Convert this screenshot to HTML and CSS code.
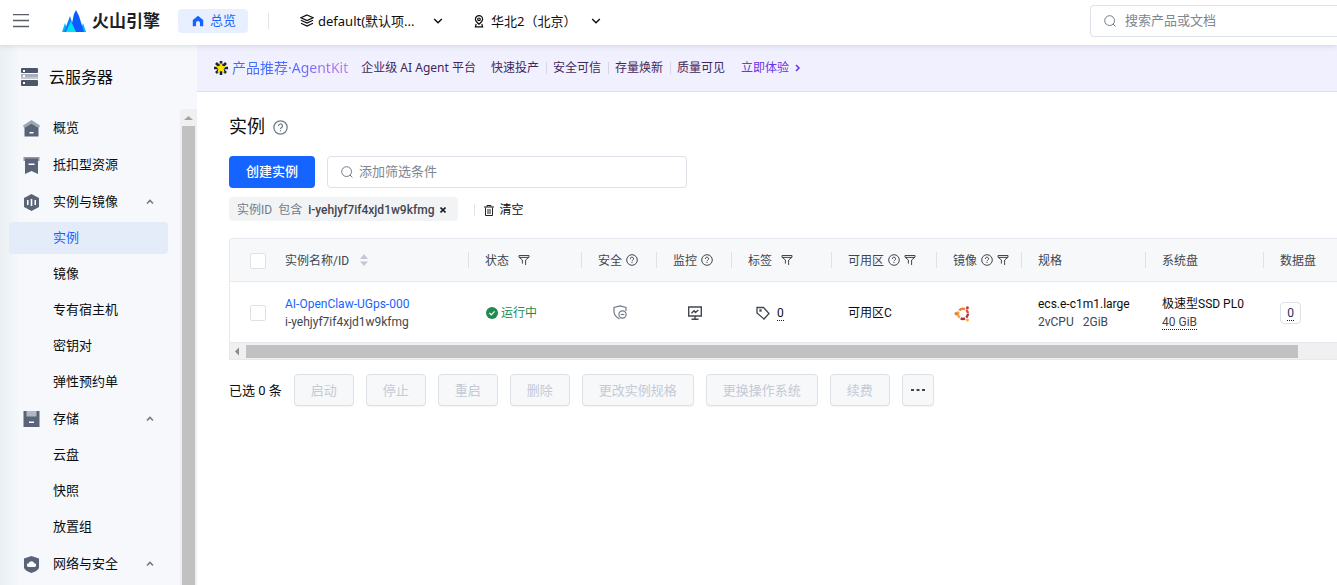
FILE: index.html
```
<!DOCTYPE html>
<html lang="zh-CN">
<head>
<meta charset="UTF-8">
<meta name="viewport" content="width=device-width, initial-scale=1.0">
<title>云服务器 - 实例</title>
<link rel="stylesheet" href="styles.css">
</head>
<body>
    <!-- Shared icons -->
    <svg class="sprite" aria-hidden="true">
        <symbol id="help" viewBox="0 0 12 12">
            <circle cx="6" cy="6" r="5.3" fill="none" stroke="currentColor"/>
            <path d="M4.4 4.9a1.6 1.6 0 1 1 2.3 1.3c-.5.3-.7.5-.7 1" fill="none" stroke="currentColor"/>
            <path d="M5.5 8.1h1v1h-1z" fill="currentColor"/>
        </symbol>
        <symbol id="filter" viewBox="0 0 12 12">
            <path d="M1 1.500h10v1.700L7.600 6v5M1 1.500v1.700L4.400 6v3.600M1 3.400h10" fill="none" stroke="currentColor"/>
        </symbol>
        <symbol id="search" viewBox="0 0 12 12">
            <circle cx="5.6" cy="5.6" r="4.9" fill="none" stroke="currentColor"/>
            <path d="M9 9l2.4 2.4" fill="none" stroke="currentColor"/>
        </symbol>
        <symbol id="down" viewBox="0 0 10 10">
            <path d="M1.2 3L5 6.800 8.800 3" fill="none" stroke="currentColor" stroke-width="1.4"/>
        </symbol>
        <symbol id="up" viewBox="0 0 8 8">
            <path d="M1 5.500l3-3 3 3" fill="none" stroke="currentColor" stroke-width="1.600"/>
        </symbol>
    </svg>

    <!-- Top bar -->
    <header class="topbar">
        <button class="menu-btn" type="button" aria-label="菜单">
            <svg width="16" height="14" viewBox="0 0 16 14"><path d="M0 .5h16M0 6.500h16M0 12.500h16" stroke="#5a5e66" stroke-width="1.400"/></svg>
        </button>
        <a class="logo" href="#">
            <svg width="24" height="22" viewBox="0 0 24 22">
                <path d="M0 22l3-9 3 9z" fill="#00b8f5"/>
                <path d="M18 22l3-9 3 9z" fill="#00b8f5"/>
                <path d="M2 22L8 6l5 16z" fill="#0a7cff"/>
                <path d="M8 22l4-18 2-4 3 6 5 16z" fill="#0a5cff"/>
                <path d="M4 22l5-11 5 11z" fill="#00e0f0"/>
            </svg>
            <span>火山引擎</span>
        </a>
        <a class="overview" href="#">
            <svg width="12" height="12" viewBox="0 0 12 12"><path d="M6 .8L.8 5v6.200H4V8a2 2 0 0 1 4 0v3.200h3.200V5z" fill="#1664ff"/></svg>
            <span>总览</span>
        </a>
        <span class="topbar-line"></span>
        <button class="picker project" type="button">
            <svg width="14" height="14" viewBox="0 0 14 14" fill="none" stroke="currentColor" stroke-width="1.200"><path d="M7 1l6 2.800-6 2.800-6-2.800zM1 6.300l6 2.800 6-2.800M1 9.300l6 2.800 6-2.800"/></svg>
            <span>default(默认项...</span>
            <svg class="arrow" width="10" height="10"><use href="#down"/></svg>
        </button>
        <button class="picker region" type="button">
            <svg width="10" height="13" viewBox="0 0 10 13" fill="none" stroke="currentColor" stroke-width="1.200"><path d="M5 9.200C2.600 7.400 1.400 6 1.400 4.300a3.600 3.600 0 0 1 7.200 0C8.600 6 7.400 7.400 5 9.200z"/><circle cx="5" cy="4.300" r="1.300"/><path d="M2.200 9L1.400 11.800h7.200L7.800 9"/></svg>
            <span>华北2（北京）</span>
            <svg class="arrow" width="10" height="10"><use href="#down"/></svg>
        </button>
        <label class="top-search">
            <svg width="12" height="12"><use href="#search"/></svg>
            <input type="search" placeholder="搜索产品或文档" aria-label="搜索">
        </label>
    </header>

    <div class="layout">
        <!-- Side navigation -->
        <aside class="sidebar">
            <div class="service">
                <svg width="18" height="18" viewBox="0 0 18 18">
                    <rect x="0" width="17" height="5" rx="1" fill="#4d566b"/>
                    <rect x="0" y="6" width="17" height="3" fill="#a9afbd"/>
                    <rect x="0" y="9" width="17" height="2" fill="#c3c8d1"/>
                    <rect x="0" y="12" width="17" height="6" rx="1" fill="#4d566b"/>
                    <path d="M2 2h2v2H2zM2 7h2v2H2zM2 14h2v2H2z" fill="#fff"/>
                </svg>
                <span>云服务器</span>
            </div>
            <div class="side-body">
                <nav class="nav">
                    <div class="group">
                        <a class="item top" href="#">
                            <svg width="17" height="17" viewBox="0 0 17 17"><path d="M8.500 0L17 5.500 16 8H1L0 5.500z" fill="#a0a6b2"/><path d="M1.500 8l7-4.200 7 4.200v8.500h-14z" fill="#5a6478"/><path d="M6.500 12h4v1.500h-4z" fill="#fff"/></svg>
                            <span>概览</span>
                        </a>
                    </div>
                    <div class="group">
                        <a class="item top" href="#">
                            <svg width="17" height="17" viewBox="0 0 17 17"><path d="M.5 0h16v4H.5z" fill="#9299a7"/><path d="M2 1.500h13V17l-6.500-3L2 17z" fill="#5a6478"/><path d="M5.500 6.500h6V8h-6z" fill="#fff"/></svg>
                            <span>抵扣型资源</span>
                        </a>
                    </div>
                    <div class="group">
                        <a class="item top" href="#">
                            <svg width="17" height="17" viewBox="0 0 17 17"><path d="M8.500 0L16 4v9l-7.500 4L1 13V4z" fill="#5a6478"/><path d="M4 6h1.500v5H4zM7.700 5h1.600v7H7.700zM11.500 6H13v5h-1.500z" fill="#fff"/></svg>
                            <span>实例与镜像</span>
                            <svg class="fold" width="8" height="8"><use href="#up"/></svg>
                        </a>
                        <a class="item active" href="#">实例</a>
                        <a class="item" href="#">镜像</a>
                        <a class="item" href="#">专有宿主机</a>
                        <a class="item" href="#">密钥对</a>
                        <a class="item" href="#">弹性预约单</a>
                    </div>
                    <div class="group">
                        <a class="item top" href="#">
                            <svg width="17" height="17" viewBox="0 0 17 17"><path d="M.5 0h16v16H.5z" fill="#5a6478"/><path d="M3.500 0h10v5.500h-10z" fill="#b2b8c2"/><path d="M6 10.500h5V12H6z" fill="#fff"/></svg>
                            <span>存储</span>
                            <svg class="fold" width="8" height="8"><use href="#up"/></svg>
                        </a>
                        <a class="item" href="#">云盘</a>
                        <a class="item" href="#">快照</a>
                        <a class="item" href="#">放置组</a>
                    </div>
                    <div class="group">
                        <a class="item top" href="#">
                            <svg width="17" height="17" viewBox="0 0 17 17"><path d="M8.500 0L16 2.500V12c-1 2.200-4 4-7.500 5C5 16 2 14.200 1 12V2.500z" fill="#5a6478"/><path d="M5.700 11a1.900 1.900 0 0 1 0-3.800 3 3 0 0 1 5.600 0 1.900 1.900 0 0 1 0 3.800z" fill="#fff"/></svg>
                            <span>网络与安全</span>
                            <svg class="fold" width="8" height="8"><use href="#up"/></svg>
                        </a>
                    </div>
                </nav>
                <div class="vscroll">
                    <svg width="13" height="17" viewBox="0 0 13 17"><path d="M2 11l4.500-4 4.500 4z" fill="#a3a3a3"/></svg>
                    <div class="vthumb"></div>
                </div>
            </div>
        </aside>

        <main class="main">
            <!-- Promo banner -->
            <div class="banner">
                <svg width="14" height="14" viewBox="0 0 14 14"><path d="M7 0v14M0 7h14M2 2l10 10M12 2L2 12" stroke="#14243c" stroke-width="2.600"/><path d="M7 1.500l1.700 3.400 3.800.4-2.800 2.600.8 3.900L7 10l-3.500 1.800.8-3.900-2.800-2.600 3.800-.4z" fill="#ffe000"/></svg>
                <strong>产品推荐·AgentKit</strong>
                <span class="slogan">企业级 AI Agent 平台</span>
                <ul class="points">
                    <li>快速投产</li>
                    <li>安全可信</li>
                    <li>存量焕新</li>
                    <li>质量可见</li>
                </ul>
                <a class="try" href="#">立即体验
                    <svg width="6" height="8" viewBox="0 0 6 8"><path d="M1 1l3 3-3 3" fill="none" stroke="currentColor" stroke-width="1.600"/></svg>
                </a>
            </div>

            <div class="content">
                <h1>实例 <svg width="15" height="15"><use href="#help"/></svg></h1>

                <div class="toolbar">
                    <button class="create" type="button">创建实例</button>
                    <label class="filter-box">
                        <svg width="12" height="12"><use href="#search"/></svg>
                        <input type="text" placeholder="添加筛选条件" aria-label="筛选条件">
                    </label>
                </div>

                <div class="filters">
                    <span class="tag">
                        <span>实例ID</span>
                        <span>包含</span>
                        <b>i-yehjyf7if4xjd1w9kfmg</b>
                        <button type="button" aria-label="移除">
                            <svg width="6" height="6" viewBox="0 0 6 6"><path d="M.5.5l5 5M5.500.5l-5 5" stroke="#1d2129" stroke-width="1.600"/></svg>
                        </button>
                    </span>
                    <button class="clear" type="button">
                        <svg width="10" height="11" viewBox="0 0 10 11" fill="none" stroke="#1d2129"><path d="M0 2h10M3 2V.5h4V2"/><path d="M1.500 2.500v8h7v-8M4 4v5M6 4v5"/></svg>
                        清空
                    </button>
                </div>

                <!-- Instance list -->
                <div class="table-wrap">
                    <table>
                        <colgroup>
                            <col class="w-check"><col class="w-name"><col class="w-state"><col class="w-icon"><col class="w-icon"><col class="w-tag"><col class="w-zone"><col class="w-image"><col class="w-spec"><col class="w-disk"><col class="w-data">
                        </colgroup>
                        <thead>
                            <tr>
                                <th class="plain check"><input type="checkbox" aria-label="全选"></th>
                                <th>实例名称/ID <svg class="sort" width="8" height="12" viewBox="0 0 8 12"><path d="M0 5l4-5 4 5zM0 7.500h8l-4 4.500z" fill="#c4c7d6"/></svg></th>
                                <th>状态 <svg class="gap" width="12" height="12"><use href="#filter"/></svg></th>
                                <th>安全<svg width="12" height="12"><use href="#help"/></svg></th>
                                <th>监控<svg width="12" height="12"><use href="#help"/></svg></th>
                                <th>标签 <svg class="gap" width="12" height="12"><use href="#filter"/></svg></th>
                                <th>可用区<svg width="12" height="12"><use href="#help"/></svg><svg width="12" height="12"><use href="#filter"/></svg></th>
                                <th>镜像<svg width="12" height="12"><use href="#help"/></svg><svg width="12" height="12"><use href="#filter"/></svg></th>
                                <th>规格</th>
                                <th>系统盘</th>
                                <th class="plain">数据盘</th>
                            </tr>
                        </thead>
                        <tbody>
                            <tr>
                                <td class="check"><input type="checkbox" aria-label="选择实例"></td>
                                <td><a class="name" href="#">AI-OpenClaw-UGps-000</a><div class="sub">i-yehjyf7if4xjd1w9kfmg</div></td>
                                <td><span class="running"><svg width="12" height="12" viewBox="0 0 12 12"><circle cx="6" cy="6" r="6" fill="#218a4e"/><path d="M3.400 6l1.900 1.800 3.300-3.400" fill="none" stroke="#fff" stroke-width="1.200"/></svg>运行中</span></td>
                                <td class="center">
                                    <svg width="14" height="16" viewBox="0 0 14 16" fill="none" stroke="#737a87" stroke-width="1.200"><path d="M6.500 14C3 12 1 9.500 1 6.500V2.500L7 .8l6 1.700V6"/><circle cx="9.500" cy="9.500" r="3.600"/><path d="M7.800 9.500h3.400"/></svg>
                                </td>
                                <td class="center">
                                    <svg width="14" height="14" viewBox="0 0 14 14" fill="none" stroke="#42464e" stroke-width="1.400"><path d="M.7 1h12.600v9H.7zM7 10v3M3.500 13.200h7"/><path d="M3.500 7.200L6 4.800l1.500 1.700 2.800-2.600"/></svg>
                                </td>
                                <td>
                                    <span class="labels"><svg width="14" height="14" viewBox="0 0 14 14" fill="none" stroke="#42464e" stroke-width="1.300"><path d="M1 1.500h6.500L13 7.500 8 13 1 7z"/><path d="M4 4h1v1H4z"/></svg><span class="dotted">0</span></span>
                                </td>
                                <td>可用区C</td>
                                <td>
                                    <svg class="ubuntu" width="18" height="16" viewBox="0 0 18 16" fill="none" stroke-width="2.400">
                                        <path d="M6.300 4.500A4.900 4.900 0 0 1 12 3.100" stroke="#ee7a33"/>
                                        <path d="M13.200 3.900a4.900 4.900 0 0 1 1.700 3.600" stroke="#e0552f"/>
                                        <path d="M14.900 8a4.900 4.900 0 0 1-1.700 3.500" stroke="#b92a3a"/>
                                        <path d="M12 12.400a4.900 4.900 0 0 1-4.300 0" stroke="#b92a3a"/>
                                        <path d="M6.800 11.600A4.900 4.900 0 0 1 5.600 5.600" stroke="#f5a53a"/>
                                        <circle cx="3.200" cy="7.800" r="1.700" fill="#ee7a33"/>
                                        <circle cx="14.400" cy="1.700" r="1.500" fill="#c8373c"/>
                                        <circle cx="14.400" cy="14" r="1.500" fill="#f5b13a"/>
                                    </svg>
                                </td>
                                <td>ecs.e-c1m1.large<div class="sub spec"><span>2vCPU</span><span>2GiB</span></div></td>
                                <td>极速型SSD PL0<div class="sub"><span class="dotted">40 GiB</span></div></td>
                                <td><button class="count" type="button"><span class="dotted">0</span></button></td>
                            </tr>
                        </tbody>
                    </table>
                    <div class="hscroll">
                        <svg width="16" height="13" viewBox="0 0 16 13"><path d="M9 2.500v8l-4-4z" fill="#8b8b8b"/></svg>
                        <div class="hthumb"></div>
                    </div>
                </div>

                <!-- Batch actions -->
                <div class="actions">
                    <span>已选 0 条</span>
                    <button type="button" disabled>启动</button>
                    <button type="button" disabled>停止</button>
                    <button type="button" disabled>重启</button>
                    <button type="button" disabled>删除</button>
                    <button type="button" disabled>更改实例规格</button>
                    <button type="button" disabled>更换操作系统</button>
                    <button type="button" disabled>续费</button>
                    <button class="more" type="button" aria-label="更多">
                        <svg width="14" height="2" viewBox="0 0 14 2"><path d="M0 0h3v2H0zM5.500 0h3v2h-3zM11 0h3v2h-3z" fill="#42464e"/></svg>
                    </button>
                </div>
            </div>
        </main>
    </div>
</body>
</html>
```
FILE: styles.css
```
* {
    box-sizing: border-box;
}

body {
    margin: 0;
    height: 100vh;
    display: flex;
    flex-direction: column;
    overflow: hidden;
    font-family: Roboto, "Noto Sans CJK SC", sans-serif;
    font-size: 12px;
    line-height: 18px;
    color: #0c0d0e;
    background: #fff;
}

a {
    color: inherit;
    text-decoration: none;
}

button, input {
    font: inherit;
    color: inherit;
}

button {
    border: none;
    padding: 0;
    background: none;
    cursor: pointer;
}

svg {
    flex: none;
}

.sprite {
    position: absolute;
    width: 0;
    height: 0;
}

/* Top bar */
.topbar {
    position: relative;
    z-index: 1;
    flex: none;
    display: flex;
    align-items: center;
    height: 45px;
    padding: 0 0 3px 13px;
    background: #fff;
    box-shadow: 0 1px 6px rgba(0, 0, 0, 0.12);
}

.menu-btn {
    display: flex;
    width: 16px;
}

.logo {
    display: flex;
    align-items: center;
    gap: 6px;
    margin-left: 33px;
    font-size: 17px;
    font-weight: 700;
    line-height: 24px;
    color: #1d2129;
}

.overview {
    display: flex;
    align-items: center;
    gap: 6px;
    height: 24px;
    margin-left: 18px;
    padding: 0 12px 0 14px;
    border-radius: 4px;
    background: #e8f0ff;
    color: #1664ff;
    font-size: 13px;
}

.topbar-line {
    width: 1px;
    height: 16px;
    margin-left: 20px;
    background: #e1e3e8;
}

.picker {
    display: flex;
    align-items: center;
    font-family: "Noto Sans", "Noto Sans CJK SC", sans-serif;
    font-size: 13px;
}

.picker .arrow {
    margin-left: auto;
}

.project {
    gap: 4px;
    width: 143px;
    margin-left: 31px;
}

.region {
    gap: 7px;
    width: 127px;
    margin-left: 31px;
}

.top-search {
    display: flex;
    align-items: center;
    gap: 9px;
    width: 280px;
    height: 32px;
    margin-left: auto;
    margin-right: -33px;
    padding: 0 13px;
    border: 1px solid #dde2e9;
    border-radius: 4px;
    color: #737a87;
    font-size: 13px;
}

.top-search input, .filter-box input {
    flex: 1;
    min-width: 0;
    padding: 0;
    border: none;
    outline: none;
    background: none;
}

input::placeholder {
    color: #80868f;
}

.layout {
    flex: 1;
    display: flex;
    min-height: 0;
}

/* Side navigation */
.sidebar {
    flex: none;
    display: flex;
    flex-direction: column;
    width: 197px;
    background: linear-gradient(90deg, #e9eff3, #f6f8fb 20px);
}

.service {
    flex: none;
    display: flex;
    align-items: center;
    gap: 10px;
    height: 64px;
    padding-left: 21px;
    font-size: 16px;
}

.service span {
    padding-top: 2px;
}

.side-body {
    flex: 1;
    display: flex;
    min-height: 0;
}

.nav {
    flex: 1;
    padding: 3px 12px 0 9px;
    overflow: hidden;
}

.group {
    display: flex;
    flex-direction: column;
    gap: 4px;
    margin-bottom: 5px;
}

.item {
    display: flex;
    align-items: center;
    height: 32px;
    padding-left: 44px;
    border-radius: 4px;
    font-size: 13px;
}

.item.top {
    gap: 13px;
    padding: 0 14px;
}

.item.active {
    background: #e4ecfa;
    color: #1664ff;
}

.fold {
    margin-left: auto;
    color: #737a87;
}

.vscroll {
    display: flex;
    flex-direction: column;
    width: 17px;
    padding: 0 2px;
    background: #f0f0f0;
}

.vthumb {
    flex: 1;
    background: #c1c1c1;
}

.main {
    flex: 1;
    min-width: 0;
    overflow: hidden;
}

/* Promo banner */
.banner {
    display: flex;
    align-items: center;
    height: 47px;
    padding: 0 17px;
    border-bottom: 1px solid #e0def0;
    background: #f1f0fe;
    color: #42275a;
    font-family: "Noto Sans", "Noto Sans CJK SC", sans-serif;
    white-space: nowrap;
}

.banner strong {
    margin-left: 4px;
    font-size: 14px;
    font-weight: 400;
    background: linear-gradient(90deg, #3370ff 0%, #5a6bff 55%, #d070f5 100%);
    -webkit-background-clip: text;
    background-clip: text;
    color: transparent;
}

.slogan {
    margin-left: 13px;
}

.points {
    display: flex;
    margin: 0 0 0 15px;
    padding: 0;
    list-style: none;
    line-height: 12px;
}

.points li + li {
    margin-left: 7px;
    padding-left: 6px;
    border-left: 1px solid #d8d3e6;
}

.try {
    display: flex;
    align-items: center;
    gap: 6px;
    margin-left: 16px;
    color: #6a35e8;
}

.content {
    padding: 22px 0 0 32px;
}

h1 {
    display: flex;
    align-items: center;
    gap: 8px;
    margin: 0 0 16px;
    font-size: 18px;
    font-weight: 400;
    line-height: 26px;
}

h1 svg {
    color: #737a87;
}

.toolbar {
    display: flex;
    gap: 12px;
}

.create {
    width: 86px;
    height: 32px;
    border-radius: 4px;
    background: #1664ff;
    color: #fff;
    font-size: 13px;
    font-weight: 500;
}

.filter-box {
    display: flex;
    align-items: center;
    gap: 6px;
    width: 360px;
    height: 32px;
    padding: 0 13px;
    border: 1px solid #dde2e9;
    border-radius: 4px;
    color: #737a87;
    font-size: 13px;
}

/* Active filters */
.filters {
    display: flex;
    align-items: center;
    margin: 9px 0 17px;
}

.tag {
    display: flex;
    align-items: center;
    gap: 6px;
    height: 24px;
    padding: 2px 12px 0 8px;
    border-radius: 4px;
    background: #f2f3f5;
    color: #737a87;
}

.tag b {
    color: #42464e;
    font-weight: 500;
}

.tag button, .clear {
    display: flex;
    align-items: center;
}

.clear {
    gap: 5px;
    height: 12px;
    margin: 2px 0 0 16px;
    padding-left: 9px;
    border-left: 1px solid #e1e3e8;
}

/* Instance list */
.table-wrap {
    overflow: hidden;
    border: 1px solid #e6e9ef;
    border-right: none;
    border-radius: 4px 0 0 0;
}

table {
    width: 1184px;
    table-layout: fixed;
    border-collapse: separate;
    border-spacing: 0;
}

.w-check { width: 39px; }
.w-name { width: 200px; }
.w-state { width: 113px; }
.w-icon { width: 75px; }
.w-tag { width: 100px; }
.w-zone { width: 105px; }
.w-image { width: 85px; }
.w-spec { width: 124px; }
.w-disk { width: 118px; }
.w-data { width: 150px; }

th, td {
    padding: 0 0 0 16px;
    border-bottom: 1px solid #e6e9ef;
    text-align: left;
    white-space: nowrap;
}

th {
    height: 43px;
    padding-top: 1px;
    background: #f6f8fa linear-gradient(#dde2e9, #dde2e9) no-repeat right center / 1px 16px;
    color: #42464e;
    font-weight: 400;
}

th.plain {
    background-image: none;
}

th svg {
    margin-left: 4px;
    vertical-align: -1px;
}

th .gap {
    margin-left: 6px;
}

th .sort {
    margin-left: 8px;
}

td {
    height: 61px;
    padding-top: 2px;
}

.check {
    padding-left: 20px;
}

.check input {
    display: block;
    appearance: none;
    width: 16px;
    height: 16px;
    margin: 0;
    border: 1px solid #dde2e9;
    border-radius: 2px;
    background: #fff;
}

.name {
    color: #1664ff;
}

.sub {
    color: #42464e;
}

.running {
    display: flex;
    align-items: center;
    gap: 3px;
    padding-left: 1px;
    color: #218a4e;
}

.center {
    padding: 0;
    text-align: center;
}

td svg {
    display: inline-block;
    vertical-align: middle;
}

.labels {
    display: flex;
    align-items: center;
    gap: 7px;
    padding-left: 8px;
}

.dotted {
    display: inline-block;
    line-height: 14px;
    border-bottom: 1px dotted #1d2129;
}

.spec {
    display: flex;
    gap: 9px;
}

.count {
    width: 21px;
    height: 22px;
    border: 1px solid #dde2e9;
    border-radius: 4px;
    color: #1d2f5c;
}

.hscroll {
    display: flex;
    height: 16px;
    padding: 2px 39px 1px 0;
    background: #f0f0f0;
}

.hthumb {
    flex: 1;
    background: #c1c1c1;
}

/* Batch actions */
.actions {
    display: flex;
    align-items: center;
    gap: 12px;
    margin-top: 14px;
    white-space: nowrap;
    font-size: 13px;
}

.actions span {
    padding-top: 1px;
}

.actions button {
    height: 32px;
    padding: 1px 16px 0;
    border: 1px solid #dde2e9;
    border-radius: 4px;
    background: #f6f8fa;
    box-shadow: 0 1px 1px rgba(0, 0, 0, 0.05);
    color: #c5cad5;
}

.actions .more {
    display: flex;
    align-items: center;
    justify-content: center;
    width: 32px;
    padding: 0;
}
```
